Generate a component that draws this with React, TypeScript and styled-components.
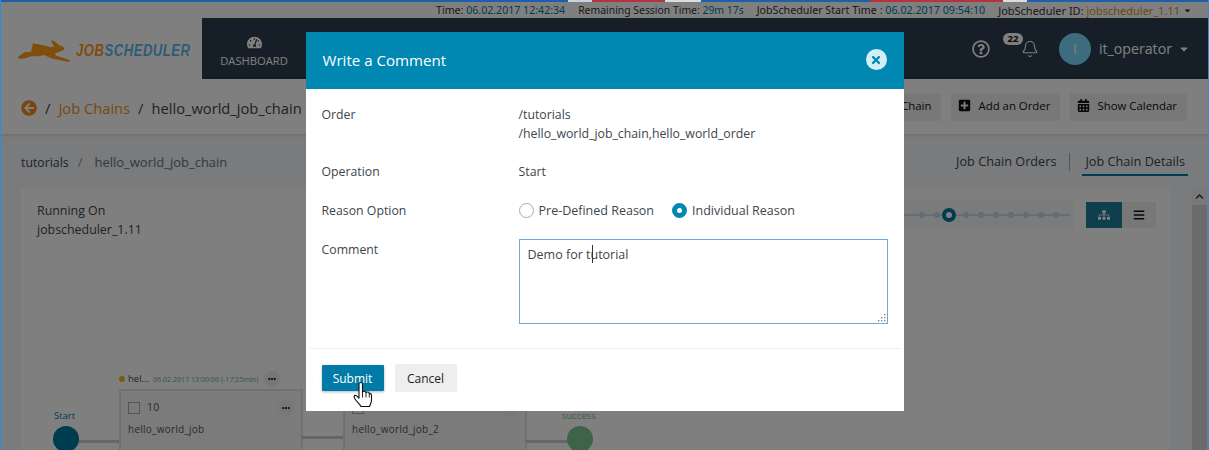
import { createGlobalStyle, styled } from "styled-components";
import { Bell } from "lucide-react";
import { FaArrowCircleLeft, FaCalendarAlt, FaPlusSquare, FaTachometerAlt, FaSitemap, FaBars, FaChevronUp, FaEllipsisH, FaTimes, FaRegQuestionCircle, FaCaretDown } from "react-icons/fa";

const GlobalStyle = createGlobalStyle`
  html, body { margin: 0; padding: 0; background: #f5f5f5; }
  body { font-family: "Open Sans", "Noto Sans", sans-serif; font-size: 13px; color: #3d464d; }
  * { box-sizing: border-box; }
`;

const Page = styled.div`
  position: relative;
  width: 1209px;
  height: 450px;
  overflow: hidden;
  background: #f5f6f8;
  border-left: 1px solid #2a8ce0;
  border-right: 1px solid #2a8ce0;
`;

const TitleStripe = styled.div`
  position: relative;
  z-index: 2;
  height: 2px;
  background: linear-gradient(
    90deg,
    #1d5fa8 0 47%,
    #c9d3de 47% 49%,
    #b0353f 49% 55%,
    #d8dde4 55% 58%,
    #1d5fa8 58% 72%,
    #b0353f 72% 83%,
    #d8dde4 83% 85%,
    #1d5fa8 85% 100%
  );
`;

const StatusBar = styled.div`
  height: 16px;
  background: #fff;
  display: flex;
  justify-content: flex-end;
  align-items: center;
  gap: 13px;
  padding-right: 16px;
  font-family: "Noto Sans", sans-serif;
  color: #333;
  white-space: nowrap;
`;

const StatusItem = styled.span<{ $size?: number }>`
  font-size: ${(p) => p.$size ?? 10.6}px;
`;

const StatusValue = styled.span<{ $orange?: boolean }>`
  color: ${(p) => (p.$orange ? "#e08b1d" : "#00789f")};
`;

const Header = styled.header`
  height: 61px;
  display: flex;
  background: #2c3e50;
`;

const LogoBox = styled.div`
  width: 201px;
  background: #fff;
  display: flex;
  align-items: center;
  padding: 5px 0 0 17px;
  gap: 6px;
  svg { flex-shrink: 0; }
`;

const LogoText = styled.span`
  display: inline-block;
  font-family: "Liberation Sans", sans-serif;
  font-size: 16px;
  font-weight: 700;
  font-style: italic;
  letter-spacing: 0.6px;
  color: #ff9a18;
  white-space: nowrap;
  transform: scaleX(0.82);
  transform-origin: left center;
`;

const LogoBlue = styled.span`
  color: #5cb8f0;
`;

const NavItem = styled.div`
  width: 104px;
  display: flex;
  flex-direction: column;
  align-items: center;
  justify-content: center;
  gap: 3px;
  padding-top: 6px;
  font-size: 11.2px;
  color: #fff;
  svg { font-size: 15px; }
`;

const HeaderRight = styled.div`
  margin-left: auto;
  display: flex;
  align-items: center;
  padding-right: 18px;
  color: #fff;
`;

const IconButton = styled.span<{ $gap?: number }>`
  position: relative;
  display: flex;
  font-size: 18px;
  margin-left: ${(p) => p.$gap ?? 0}px;
`;

const Badge = styled.span`
  position: absolute;
  top: -7px;
  left: -18px;
  height: 12px;
  width: 20px;
  border-radius: 6px;
  background: #fff;
  color: #111;
  font-size: 9.5px;
  font-weight: 700;
  line-height: 12px;
  text-align: center;
`;

const Avatar = styled.span`
  width: 32px;
  height: 32px;
  border-radius: 50%;
  background: #7ad8ff;
  display: flex;
  align-items: center;
  justify-content: center;
  font-size: 14px;
  margin: 0 8px 0 20px;
`;

const UserName = styled.span`
  font-size: 14.2px;
  display: flex;
  align-items: center;
  gap: 6px;
  svg { font-size: 12px; }
`;

const CrumbBar = styled.div`
  height: 55px;
  background: #fff;
  box-shadow: 0 1px 3px rgba(0, 0, 0, 0.12);
  display: flex;
  align-items: center;
  padding: 0 21px 0 20px;
  font-size: 14.7px;
`;

const CrumbTrail = styled.div`
  display: flex;
  align-items: center;
  padding-top: 2px;
`;

const BackIcon = styled.span`
  display: flex;
  color: #ef8f1c;
  font-size: 16px;
`;

const CrumbSep = styled.span`
  margin: 0 8px;
`;

const CrumbLink = styled.span`
  color: #ef8f1c;
`;

const CrumbActions = styled.div`
  margin-left: auto;
  display: flex;
  gap: 10px;
`;

const ActionButton = styled.span`
  height: 28px;
  padding: 0 10px 2px 7px;
  display: flex;
  align-items: center;
  gap: 7px;
  background: #f0f0f0;
  border-radius: 2px;
  font-size: 11.4px;
  color: #111;
  svg { font-size: 13px; }
`;

const SubBar = styled.div`
  height: 54px;
  display: flex;
  align-items: center;
  justify-content: space-between;
  padding: 1px 20px 0;
  font-size: 13px;
`;

const PathFirst = styled.span`
  font-size: 12.3px;
`;

const PathSep = styled.span`
  margin: 0 12px 0 9px;
  color: #8c8c8c;
`;

const PathLast = styled.span`
  color: #6a7278;
`;

const Tabs = styled.div`
  display: flex;
  align-items: center;
  font-size: 12.7px;
`;

const Tab = styled.span<{ $active?: boolean }>`
  height: 28px;
  padding: 0 3px;
  display: flex;
  align-items: center;
  color: #3d464d;
  border-bottom: 2px solid ${(p) => (p.$active ? "#00789f" : "transparent")};
`;

const TabRule = styled.span`
  width: 1px;
  height: 18px;
  background: #aaa;
  margin: 0 12px 0 10px;
`;

const Card = styled.div`
  position: relative;
  margin-left: 20px;
  width: 1149px;
  height: 300px;
  background: #fff;
  padding: 13px 16px;
  font-size: 12.4px;
  line-height: 19px;
  color: #3d464d;
`;

const Scrollbar = styled.div`
  position: absolute;
  top: 188px;
  right: 1px;
  width: 15px;
  height: 262px;
  background: #f1f1f1;
`;

const ScrollArrow = styled.div`
  height: 17px;
  display: flex;
  align-items: center;
  justify-content: center;
  font-size: 9px;
  color: #333;
`;

const ScrollThumb = styled.div`
  height: 100%;
  background: #d6d6d6;
`;

const Track = styled.div`
  position: absolute;
  top: 12px;
  left: 883px;
  width: 170px;
  height: 29px;
  background: #f5f6f8;
`;

const TrackLine = styled.div`
  position: absolute;
  top: 14px;
  left: 0;
  right: 4px;
  height: 2px;
  background: #d3d9e4;
`;

const TrackDot = styled.span<{ $x: number }>`
  position: absolute;
  top: 12px;
  left: ${(p) => p.$x}px;
  width: 6px;
  height: 6px;
  border-radius: 50%;
  background: #cdd4e2;
`;

const TrackCurrent = styled.span`
  position: absolute;
  top: 8px;
  left: 38px;
  width: 14px;
  height: 14px;
  border-radius: 50%;
  border: 4px solid #00789f;
  background: #fff;
`;

const ViewToggle = styled.div`
  position: absolute;
  top: 14px;
  left: 1065px;
  display: flex;
`;

const ViewButton = styled.span<{ $active?: boolean }>`
  width: ${(p) => (p.$active ? 36 : 34)}px;
  height: 26px;
  display: flex;
  align-items: center;
  justify-content: center;
  font-size: 12px;
  background: ${(p) => (p.$active ? "#1f7f9c" : "#f0f0f0")};
  color: ${(p) => (p.$active ? "#fff" : "#111")};
`;

const StepLabel = styled.span<{ $x: number; $y: number; $green?: boolean }>`
  position: absolute;
  left: ${(p) => p.$x}px;
  top: ${(p) => p.$y}px;
  font-size: 9.5px;
  line-height: 12px;
  color: ${(p) => (p.$green ? "#6fc08c" : "#00789f")};
`;

const StepCircle = styled.span<{ $x: number; $green?: boolean }>`
  position: absolute;
  left: ${(p) => p.$x}px;
  top: 238px;
  width: 26px;
  height: 26px;
  border-radius: 50%;
  background: ${(p) => (p.$green ? "#7cc68f" : "#00789f")};
`;

const Connector = styled.span<{ $x: number; $w: number; $y: number }>`
  position: absolute;
  left: ${(p) => p.$x}px;
  top: ${(p) => p.$y}px;
  width: ${(p) => p.$w}px;
  height: 3px;
  background: #ccc;
`;

const JobNode = styled.div<{ $x: number }>`
  position: absolute;
  left: ${(p) => p.$x}px;
  top: 201px;
  width: 184px;
  height: 90px;
  background: #f7f7f7;
  border: 2px solid #e2e2e2;
  padding: 7px 7px;
  font-size: 10px;
  letter-spacing: 0.25px;
  color: #555;
`;

const JobHead = styled.div`
  display: flex;
  align-items: center;
  gap: 7px;
  font-size: 10.5px;
  margin-bottom: 3px;
`;

const JobCheck = styled.span`
  width: 12px;
  height: 12px;
  border: 1.5px solid #aaa;
`;

const MoreDot = styled.span`
  margin-left: auto;
  width: 16px;
  height: 16px;
  border-radius: 50%;
  background: #eee;
  display: flex;
  align-items: center;
  justify-content: center;
  font-size: 8px;
  color: #222;
`;

const OrderTag = styled.div`
  position: absolute;
  left: 98px;
  top: 183px;
  display: flex;
  align-items: center;
  gap: 3px;
  font-size: 9.5px;
  line-height: 14px;
  white-space: nowrap;
`;

const OrderDot = styled.span`
  width: 6px;
  height: 6px;
  border-radius: 50%;
  background: #f3b814;
`;

const OrderTime = styled.span`
  margin-left: 1px;
  font-size: 7.1px;
  color: #62b57c;
`;

const OrderMore = styled(MoreDot)`
  margin-left: 3px;
`;

const Overlay = styled.div`
  position: absolute;
  inset: 0;
  background: rgba(0, 0, 0, 0.5);
  display: flex;
  justify-content: center;
  padding-top: 32px;
`;

const Modal = styled.div`
  position: relative;
  width: 598px;
  height: 379px;
  background: #fff;
`;

const ModalHeader = styled.div`
  height: 57px;
  padding: 0 17px 2px 17px;
  background: #0088b3;
  color: #fff;
  display: flex;
  align-items: center;
  justify-content: space-between;
  font-size: 15.1px;
`;

const CloseButton = styled.span`
  width: 21px;
  height: 21px;
  border-radius: 50%;
  background: #d4eef6;
  color: #0088b3;
  display: flex;
  align-items: center;
  justify-content: center;
  font-size: 12px;
`;

const ModalBody = styled.div`
  height: 260px;
  margin: 0 4px;
  padding: 16px 12px 0;
  display: flex;
  flex-direction: column;
  gap: 19px;
  font-size: 12.3px;
  line-height: 19px;
  color: #3d464d;
  border-bottom: 1px solid #eee;
`;

const FormRow = styled.div<{ $center?: boolean }>`
  display: grid;
  grid-template-columns: 197px 369px;
  align-items: ${(p) => (p.$center ? "center" : "start")};
`;

const CommentLabel = styled.span`
  padding-top: 1px;
`;

const RadioRow = styled.div`
  display: flex;
  align-items: center;
  gap: 18px;
  height: 20px;
  font-size: 12.5px;
`;

const RadioOption = styled.span`
  display: flex;
  align-items: center;
  gap: 5px;
`;

const RadioMark = styled.span<{ $on?: boolean }>`
  width: 15px;
  height: 15px;
  border-radius: 50%;
  background: #fff;
  border: ${(p) => (p.$on ? "5px solid #0088b3" : "1px solid #aaa")};
`;

const CommentBox = styled.div`
  position: relative;
  width: 369px;
  height: 85px;
  border: 1px solid #6fa8dc;
  padding: 5px 8px;
  font-size: 12.5px;
`;

const Caret = styled.span`
  position: absolute;
  left: 72px;
  top: 5px;
  width: 1px;
  height: 18px;
  background: #333;
`;

const ResizeGrip = styled.svg`
  position: absolute;
  right: 1px;
  bottom: 1px;
`;

const ModalFooter = styled.div`
  height: 62px;
  display: flex;
  align-items: center;
  padding: 0 16px 4px;
  gap: 11px;
`;

const SubmitButton = styled.span`
  width: 62px;
  height: 26px;
  background: #007ba7;
  color: #fff;
  display: flex;
  align-items: center;
  justify-content: center;
  font-size: 12px;
  border-radius: 1px;
  box-shadow: 0 1px 3px rgba(0, 0, 0, 0.3);
`;

const CancelButton = styled.span`
  width: 62px;
  height: 28px;
  background: #eee;
  color: #222;
  display: flex;
  align-items: center;
  justify-content: center;
  font-size: 12px;
  border-radius: 1px;
`;

const HandCursor = styled.svg`
  position: absolute;
  left: 47px;
  top: 349px;
`;

const Rabbit = () => (
  <svg width="52" height="24" viewBox="0 0 52 24">
    <path
      d="M0 18 L7 13 L13 13 C14 9 14.5 6 15 4 L17 5 C22 5 28 7 32 8 L36 8 L33 1 C37 2 40 5 42 7 C44 6 45 8 46 9 L46 11 C43 12 41 13 38 14 C36 15 37 16 39 17 L52 21 L51 23 L36 20 C31 19 28 16 25 16 C22 18 18 17 14 17 L8 19 L1 20 Z"
      fill="#ff9a18"
    />
  </svg>
);

export default function App() {
  return (
    <Page>
      <GlobalStyle />
      <TitleStripe />
      <StatusBar>
        <StatusItem>
          Time: <StatusValue>06.02.2017 12:42:34</StatusValue>
        </StatusItem>
        <StatusItem $size={10.4}>
          Remaining Session Time: <StatusValue>29m 17s</StatusValue>
        </StatusItem>
        <StatusItem $size={10.7}>
          JobScheduler Start Time : <StatusValue>06.02.2017 09:54:10</StatusValue>
        </StatusItem>
        <StatusItem $size={11}>
          JobScheduler ID: <StatusValue $orange>jobscheduler_1.11</StatusValue> <FaCaretDown size={9} />
        </StatusItem>
      </StatusBar>
      <Header>
        <LogoBox>
          <Rabbit />
          <LogoText>
            JOB<LogoBlue>SCHEDULER</LogoBlue>
          </LogoText>
        </LogoBox>
        <NavItem>
          <FaTachometerAlt />
          DASHBOARD
        </NavItem>
        <HeaderRight>
          <IconButton>
            <FaRegQuestionCircle />
          </IconButton>
          <IconButton $gap={31}>
            <Badge>22</Badge>
            <Bell size={18} strokeWidth={1.5} />
          </IconButton>
          <Avatar>I</Avatar>
          <UserName>
            it_operator <FaCaretDown />
          </UserName>
        </HeaderRight>
      </Header>
      <CrumbBar>
        <CrumbTrail>
          <BackIcon>
            <FaArrowCircleLeft />
          </BackIcon>
          <CrumbSep>/</CrumbSep>
          <CrumbLink>Job Chains</CrumbLink>
          <CrumbSep>/</CrumbSep>
          <span>hello_world_job_chain</span>
        </CrumbTrail>
        <CrumbActions>
          <ActionButton>Stop Job Chain</ActionButton>
          <ActionButton>
            <FaPlusSquare /> Add an Order
          </ActionButton>
          <ActionButton>
            <FaCalendarAlt /> Show Calendar
          </ActionButton>
        </CrumbActions>
      </CrumbBar>
      <SubBar>
        <span>
          <PathFirst>tutorials</PathFirst>
          <PathSep>/</PathSep>
          <PathLast>hello_world_job_chain</PathLast>
        </span>
        <Tabs>
          <Tab>Job Chain Orders</Tab>
          <TabRule />
          <Tab $active>Job Chain Details</Tab>
        </Tabs>
      </SubBar>
      <Card>
        Running On
        <br />
        jobscheduler_1.11
        <Track>
          <TrackLine />
          {[15, 30, 59, 74, 89, 104, 119, 134, 149].map((x) => (
            <TrackDot key={x} $x={x} />
          ))}
          <TrackCurrent />
        </Track>
        <ViewToggle>
          <ViewButton $active>
            <FaSitemap />
          </ViewButton>
          <ViewButton>
            <FaBars />
          </ViewButton>
        </ViewToggle>
        <StepLabel $x={33} $y={222}>
          Start
        </StepLabel>
        <Connector $x={55} $w={50} $y={252} />
        <StepCircle $x={32} />
        <OrderTag>
          <OrderDot />
          hel...
          <OrderTime>06.02.2017 13:00:00 (-17:25min)</OrderTime>
          <OrderMore>
            <FaEllipsisH />
          </OrderMore>
        </OrderTag>
        <JobNode $x={98}>
          <JobHead>
            <JobCheck />
            10
            <MoreDot>
              <FaEllipsisH />
            </MoreDot>
          </JobHead>
          hello_world_job
        </JobNode>
        <Connector $x={280} $w={45} $y={248} />
        <JobNode $x={322}>
          <JobHead>
            <JobCheck />
            20
            <MoreDot>
              <FaEllipsisH />
            </MoreDot>
          </JobHead>
          hello_world_job_2
        </JobNode>
        <Connector $x={505} $w={45} $y={252} />
        <StepLabel $x={541} $y={222} $green>
          success
        </StepLabel>
        <StepCircle $x={546} $green />
      </Card>
      <Scrollbar>
        <ScrollArrow>
          <FaChevronUp />
        </ScrollArrow>
        <ScrollThumb />
      </Scrollbar>
      <Overlay>
        <Modal>
          <ModalHeader>
            Write a Comment
            <CloseButton>
              <FaTimes />
            </CloseButton>
          </ModalHeader>
          <ModalBody>
            <FormRow>
              <span>Order</span>
              <span>
                /tutorials
                <br />
                /hello_world_job_chain,hello_world_order
              </span>
            </FormRow>
            <FormRow>
              <span>Operation</span>
              <span>Start</span>
            </FormRow>
            <FormRow $center>
              <span>Reason Option</span>
              <RadioRow>
                <RadioOption>
                  <RadioMark />
                  Pre-Defined Reason
                </RadioOption>
                <RadioOption>
                  <RadioMark $on />
                  Individual Reason
                </RadioOption>
              </RadioRow>
            </FormRow>
            <FormRow>
              <CommentLabel>Comment</CommentLabel>
              <CommentBox>
                Demo for tutorial
                <Caret />
                <ResizeGrip width="9" height="9" viewBox="0 0 9 9">
                  <g fill="#888">
                    <rect x="7" y="1" width="1.4" height="1.4" />
                    <rect x="4" y="4" width="1.4" height="1.4" />
                    <rect x="7" y="4" width="1.4" height="1.4" />
                    <rect x="1" y="7" width="1.4" height="1.4" />
                    <rect x="4" y="7" width="1.4" height="1.4" />
                    <rect x="7" y="7" width="1.4" height="1.4" />
                  </g>
                </ResizeGrip>
              </CommentBox>
            </FormRow>
          </ModalBody>
          <ModalFooter>
            <SubmitButton>Submit</SubmitButton>
            <CancelButton>Cancel</CancelButton>
          </ModalFooter>
          <HandCursor width="20" height="27" viewBox="0 0 20 27">
            <path
              d="M6 3 C6 1 9.5 1 9.5 3 V11 C11 10 12.5 10 13 11.5 C14.5 10.5 16 11 16.3 12.5 C17.5 12 18.5 13 18.5 14.5 V19 C18.5 22 17 23.5 16.5 25.5 H8 C7 23 4 21 2 18 C0.5 16 1 14 3 14.5 C4.5 15 5.5 16.5 6 17.5 Z"
              fill="#fff"
              stroke="#111"
              strokeWidth="1.1"
            />
            <path d="M9.5 11 V16.5 M13 11.5 V16.5 M16.3 12.5 V16.5" stroke="#111" strokeWidth="0.9" fill="none" />
          </HandCursor>
        </Modal>
      </Overlay>
    </Page>
  );
}
